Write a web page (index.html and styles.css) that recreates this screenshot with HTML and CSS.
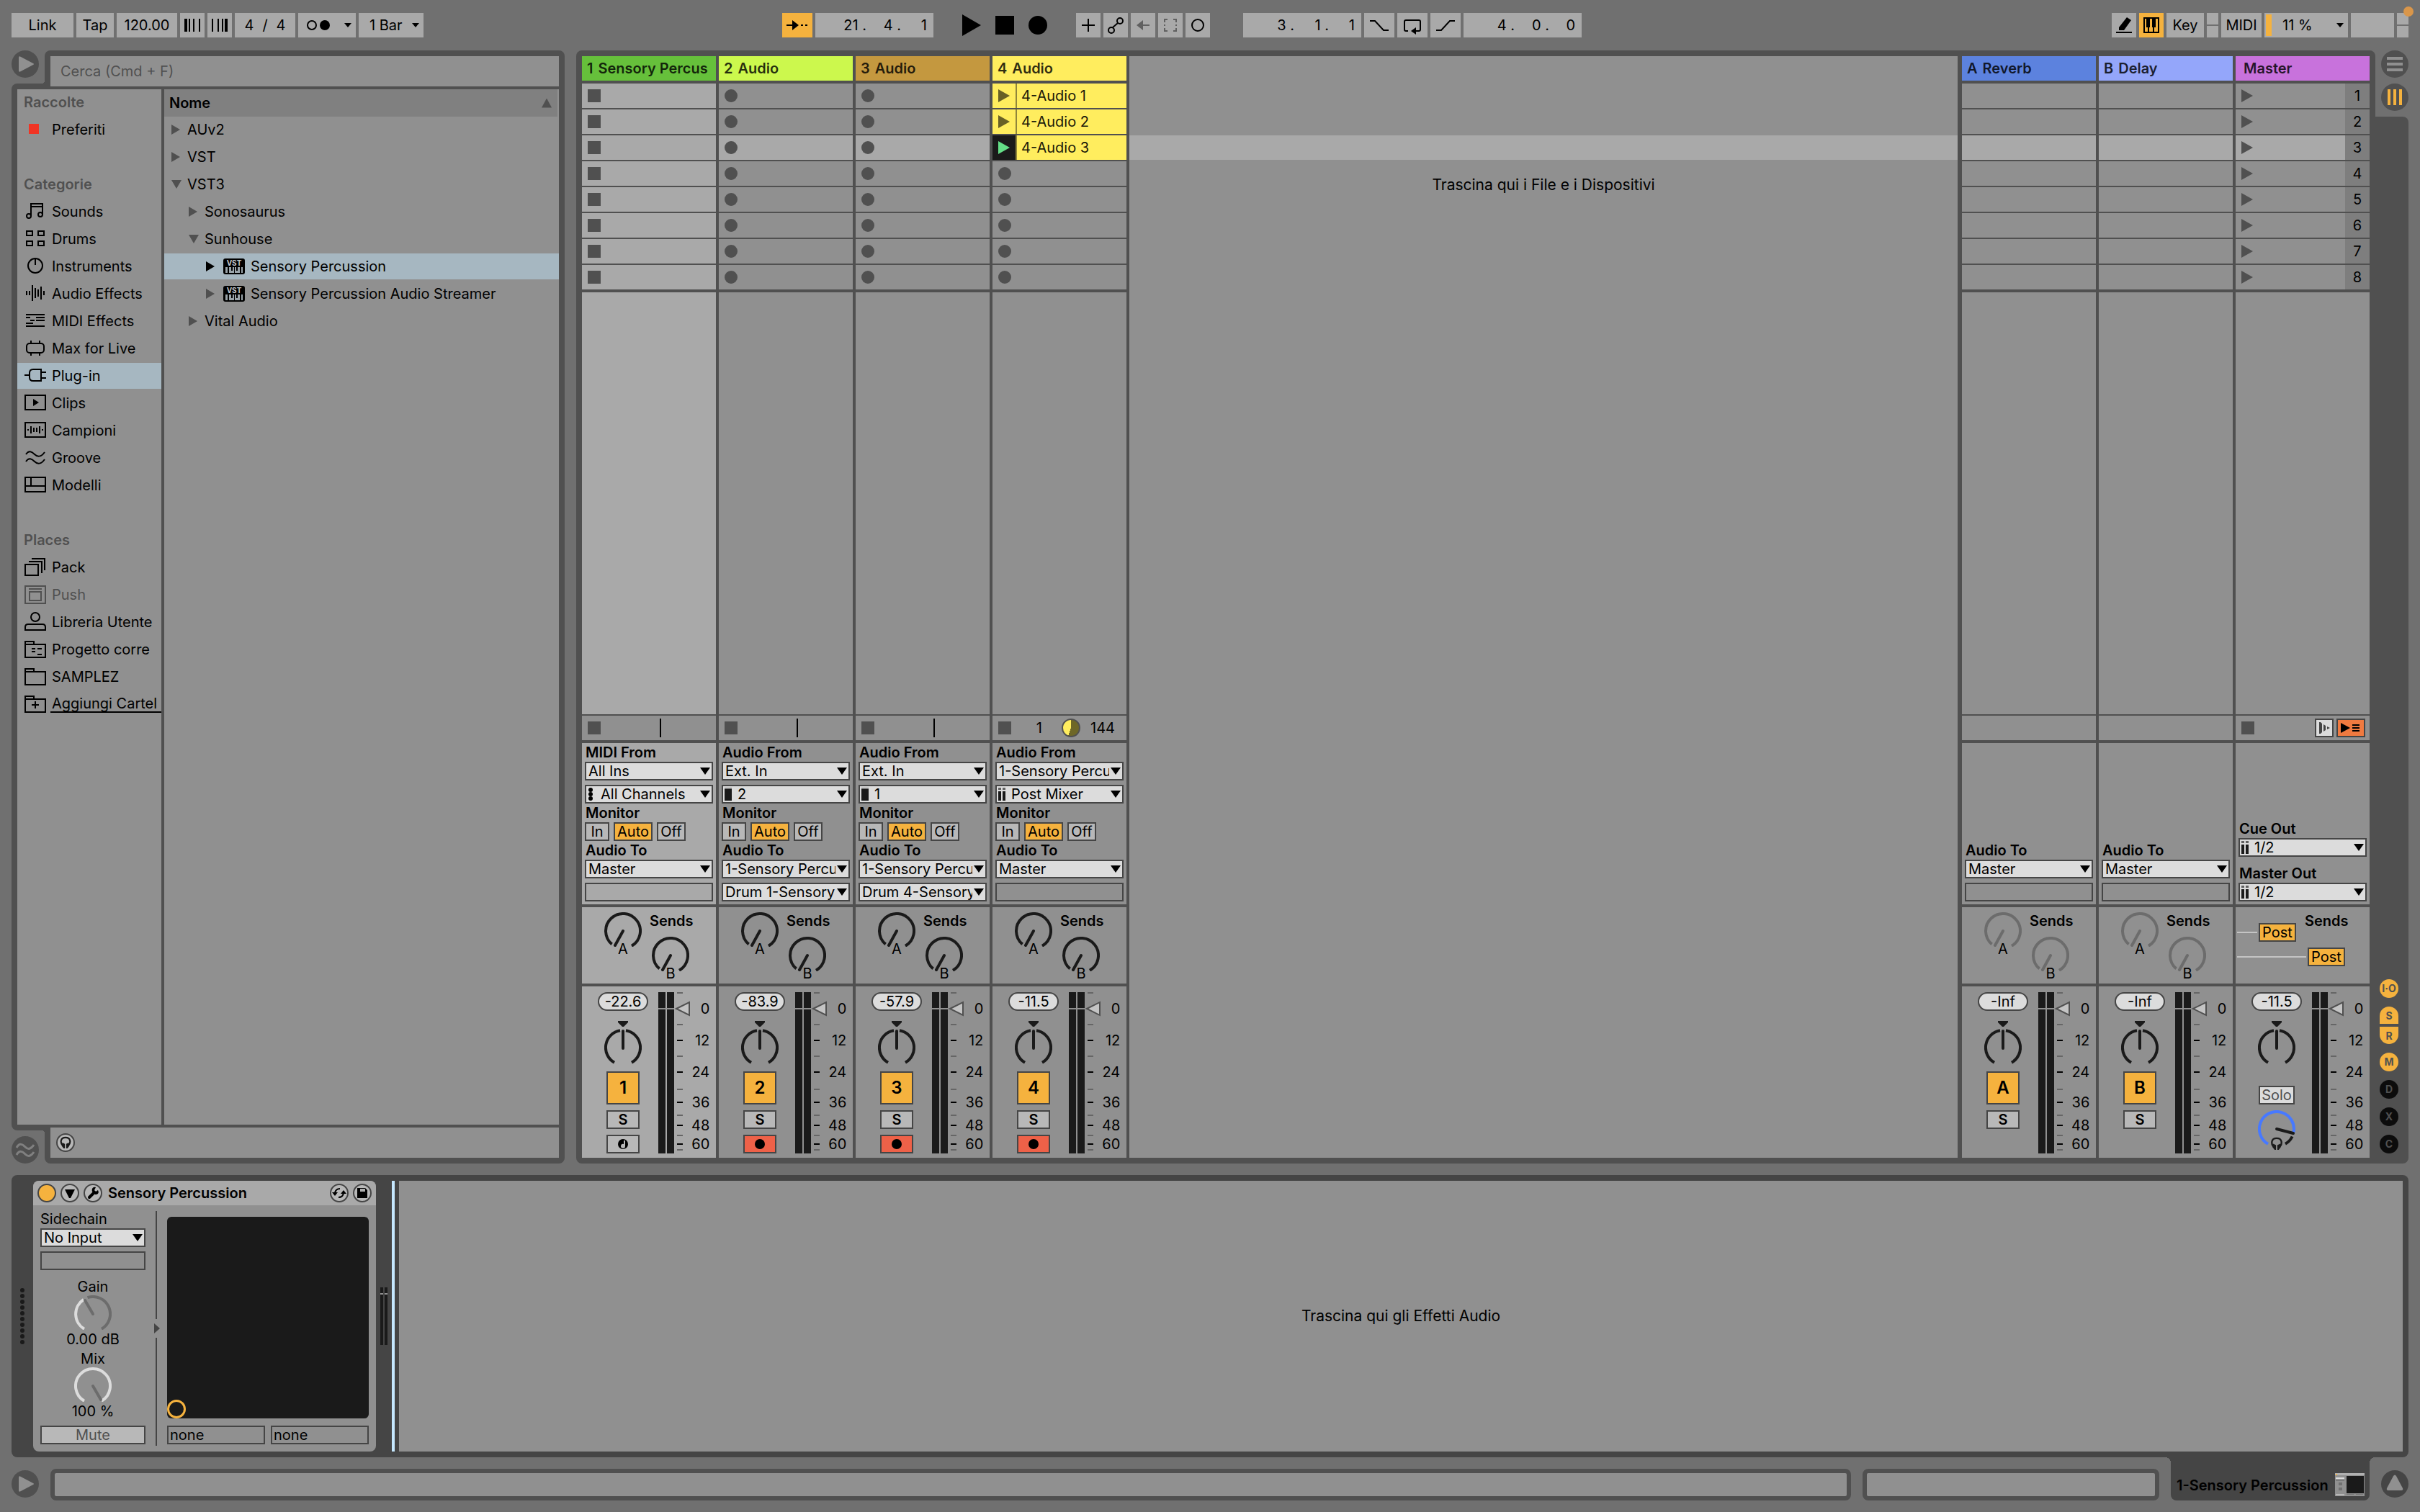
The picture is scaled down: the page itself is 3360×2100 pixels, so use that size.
FILE: index.html
```
<!DOCTYPE html>
<html lang="it">
<head>
<meta charset="utf-8">
<meta name="viewport" content="width=device-width, initial-scale=1">
<title>Live – Sensory Percussion</title>
<link rel="stylesheet" href="styles.css">
</head>
<body>

<!-- Shared drawings -->
<svg class="defs" aria-hidden="true">
  <symbol id="meter" viewBox="0 0 46 224">
    <path fill="#1a1a1a" d="M0 0h10v224H0zM12 0h10v224H12z"/>
    <path fill="#909090" d="M0 22h22v2H0z"/>
    <path stroke="#666" stroke-width="2" d="M26 1h8M26 45h8M26 89h8M26 135h8M26 171h8M26 199h8M26 219h8"/>
    <path stroke="#000" stroke-width="2" d="M26 67h8M26 111h8M26 153h8M26 185h8M26 211h8"/>
    <path fill="#c4c4c4" stroke="#505050" stroke-width="2" d="M25 23 43 14V32z"/>
  </symbol>
  <symbol id="send" viewBox="0 0 52 48">
    <path fill="none" stroke="currentColor" stroke-width="4" d="M10.600 44.400A24 24 0 1 1 38 46.800"/>
    <path stroke="currentColor" stroke-width="4" stroke-linecap="round" d="M26 26 15 46"/>
  </symbol>
  <symbol id="pan" viewBox="0 -11 52 62">
    <path fill="#1a1a1a" d="M19-11h14v2l-6 6h-2l-6-6z"/>
    <path fill="none" stroke="#1a1a1a" stroke-width="4" d="M14 46.800A24 24 0 0 1 22 2.300M30 2.300A24 24 0 0 1 38 46.800"/>
    <path stroke="#1a1a1a" stroke-width="4" stroke-linecap="round" d="M26 3v24"/>
  </symbol>
  <symbol id="phones" viewBox="0 0 18 20">
    <path fill="none" stroke="currentColor" stroke-width="2.500" d="M5 15C0 10 1 2 9 2s9 8 4 13"/>
    <path fill="currentColor" d="M4 10l4 2v7H6l-3-4zM14 10l-4 2v7h2l3-4z"/>
  </symbol>
  <symbol id="vst" viewBox="0 0 30 22">
    <rect width="30" height="22" rx="3"/>
    <path fill="#9aa4aa" d="M3 12h24v8H3z"/>
    <path d="M6 12h2v8H6zM11 12h2v5h-2zM15 12h1v8h-1zM18 12h2v5h-2zM23 12h2v8h-2z"/>
  </symbol>
  <symbol id="folder" viewBox="0 0 30 24"><path d="M1 23V1h12v4h16v18zM1 5h12"/></symbol>
</svg>

<header class="toolbar">
  <div class="group">
    <button class="ctl w86">Link</button>
    <button class="ctl w52">Tap</button>
    <input class="ctl w84" aria-label="Tempo" value="120.00">
    <button class="ctl w34" aria-label="Nudge giù"><svg width="34" height="34"><path d="M6 8h4v18H6zM12 8h2v18h-2zM18 8h2v18h-2zM26 8h2v18h-2z"/></svg></button>
    <button class="ctl w34" aria-label="Nudge su"><svg width="34" height="34"><path d="M6 8h2v18H6zM14 8h2v18h-2zM20 8h2v18h-2zM24 8h4v18h-4z"/></svg></button>
    <div class="ctl w84 signature"><input aria-label="Numeratore" value="4"><span>/</span><input aria-label="Denominatore" value="4"></div>
    <button class="ctl w80" aria-label="Metronomo"><svg width="80" height="34"><circle cx="19" cy="17" r="6" fill="none" stroke="#000" stroke-width="2"/><circle cx="37" cy="17" r="7"/><path d="M64 14h10l-5 6z"/></svg></button>
    <div class="pick small w90"><select class="ctl" aria-label="Quantizzazione"><option>1 Bar</option></select></div>
  </div>
  <span class="space-a"></span>
  <div class="group">
    <button class="ctl w42 on" aria-label="Segui"><svg width="42" height="34"><path d="M6 16h8v-6l9 7-9 7v-6H6zM26 16h3v2h-3zM32 16h3v2h-3z"/></svg></button>
    <div class="ctl position"><input aria-label="Battuta" value="21 ."><input aria-label="Movimento" value="4 ."><input aria-label="Sedicesimo" value="1"></div>
    <div class="transport">
      <button aria-label="Play"><svg width="26" height="30"><path d="M0 0 26 15 0 30z"/></svg></button>
      <button aria-label="Stop"><svg width="26" height="26"><path d="M0 0h26v26H0z"/></svg></button>
      <button aria-label="Registra"><svg width="26" height="26"><circle cx="13" cy="13" r="13"/></svg></button>
    </div>
    <button class="ctl w34" aria-label="Overdub"><svg class="line" width="34" height="34"><path d="M8 17h18M17 8v18"/></svg></button>
    <button class="ctl w34" aria-label="Arma automazione"><svg class="line" width="34" height="34"><circle cx="11" cy="24" r="4"/><circle cx="23" cy="11" r="4"/><path d="M13 20 20 14"/></svg></button>
    <button class="ctl w34" aria-label="Riattiva automazione"><svg width="34" height="34"><path fill="#606060" d="M8 17l9-7v6h9v2h-9v6z"/></svg></button>
    <button class="ctl w34" aria-label="Cattura MIDI"><svg class="line dim" width="34" height="34"><path d="M9 13V9h4M21 9h4v4M25 21v4h-4M13 25H9v-4M9 16v2M25 16v2"/></svg></button>
    <button class="ctl w34" aria-label="Registra sessione"><svg class="line" width="34" height="34"><circle cx="17" cy="17" r="8"/></svg></button>
    <div class="ctl position loop"><input aria-label="Inizio loop battuta" value="3 ."><input aria-label="Inizio loop movimento" value="1 ."><input aria-label="Inizio loop sedicesimo" value="1"></div>
    <button class="ctl w42" aria-label="Punch in"><svg class="line" width="42" height="34"><path d="M8 11h7l12 13h7"/></svg></button>
    <button class="ctl w42" aria-label="Loop"><svg class="line" width="42" height="34"><path d="M15 25h-3q-2 0-2-2V12q0-2 2-2h18q2 0 2 2v11q0 2-2 2h-7"/><path class="fill" d="M19 25l7-5v10z"/></svg></button>
    <button class="ctl w42" aria-label="Punch out"><svg class="line" width="42" height="34"><path d="M8 24h7l12-13h7"/></svg></button>
    <div class="ctl position"><input aria-label="Durata loop battute" value="4 ."><input aria-label="Durata loop movimenti" value="0 ."><input aria-label="Durata loop sedicesimi" value="0"></div>
  </div>
  <span class="space-b"></span>
  <div class="group last">
    <button class="ctl w34" aria-label="Disegno"><svg width="34" height="34"><path d="M6 26h22v2H6zM10 20 21 6l6 4-10 14h-7z"/></svg></button>
    <button class="ctl w34 on" aria-label="Tastiera MIDI"><svg width="34" height="34"><path fill="none" stroke="#000" stroke-width="2" d="M7 7h20v20H7zM13 7v20M20 7v20"/><path d="M10 7h5v13h-5zM18 7h5v13h-5z"/></svg></button>
    <button class="ctl w52">Key</button>
    <span class="split"><i></i><i></i></span>
    <button class="ctl w56">MIDI</button>
    <div class="pick small cpu"><i class="load"></i><select class="ctl" aria-label="Carico CPU"><option>11 %</option></select></div>
    <span class="ctl w60"></span>
    <span class="split"><i></i><i></i></span>
    <i class="alert"></i>
  </div>
</header>

<main class="main">
  <section class="browser" aria-label="Browser">
    <div class="browser-top">
      <button class="round" aria-label="Mostra browser"><svg width="38" height="38"><path fill="#909090" d="M10 10q0-3 3-1l17 9q2 1 0 2l-17 9q-3 2-3-1z"/></svg></button>
      <div class="tab"><input class="search" type="search" aria-label="Cerca" placeholder="Cerca (Cmd + F)"></div>
    </div>
    <div class="browser-body">
      <nav class="places">
        <h2>Raccolte</h2>
        <ul>
          <li><a href="#"><svg width="30" height="24"><path fill="#f03424" d="M6 4h14v14H6z"/></svg><span>Preferiti</span></a></li>
        </ul>
        <h2>Categorie</h2>
        <ul>
          <li><a href="#"><svg class="line" width="30" height="24"><path d="M9 18V1h16v15M9 5h16"/><circle cx="6" cy="18" r="3"/><circle cx="22" cy="16" r="3"/></svg><span>Sounds</span></a></li>
          <li><a href="#"><svg class="line" width="30" height="24"><path d="M3 1h8v6H3zM19 1h8v6h-8zM3 15h8v6H3zM19 15h8v6h-8z"/></svg><span>Drums</span></a></li>
          <li><a href="#"><svg class="line" width="30" height="24"><circle cx="15" cy="11" r="10"/><path d="M15 1v9"/></svg><span>Instruments</span></a></li>
          <li><a href="#"><svg class="line" width="30" height="24"><path d="M3 8v6M7 8v6M11 0v22M15 4v14M19 6v10M23 2v18M27 8v6"/></svg><span>Audio Effects</span></a></li>
          <li><a href="#"><svg class="line" width="30" height="24"><path d="M2 3h26M2 7h6M16 7h12M8 11h6M16 11h12M2 15h10M2 19h26"/></svg><span>MIDI Effects</span></a></li>
          <li><a href="#"><svg class="line" width="30" height="24"><rect x="3" y="5" width="24" height="13" rx="4"/><path d="M9 1v4M21 1v4M9 18v4M21 18v4"/></svg><span>Max for Live</span></a></li>
          <li><a href="#" class="sel"><svg class="line" width="30" height="24"><path d="M23 3H12q-5 0-5 5v6q0 5 5 5h11zM0 11h7M23 7h7M23 15h7"/></svg><span>Plug-in</span></a></li>
          <li><a href="#"><svg class="line" width="30" height="24"><path d="M1 1h28v20H1z"/><path class="fill" d="M12 6l8 5-8 5z"/></svg><span>Clips</span></a></li>
          <li><a href="#"><svg class="line" width="30" height="24"><path d="M1 1h28v20H1zM5 10v2M9 6v10M13 8v6M17 8v6M21 6v10M25 10v2"/></svg><span>Campioni</span></a></li>
          <li><a href="#"><svg class="line" width="30" height="24"><path d="M2 7c4-6 8-4 12 0s9 4 14-3M2 17c4-6 8-4 12 0s9 4 14-3"/></svg><span>Groove</span></a></li>
          <li><a href="#"><svg class="line" width="30" height="24"><path d="M1 1h28v20H1zM1 13h28M9 1v12"/></svg><span>Modelli</span></a></li>
        </ul>
        <h2>Places</h2>
        <ul>
          <li><a href="#"><svg class="line" width="30" height="24"><path d="M1 8h18v15H1zM6 4h18v16M10 0h18v16"/></svg><span>Pack</span></a></li>
          <li><a href="#" class="off"><svg class="line" width="30" height="24"><path d="M1 0h28v24H1zM6 4h18M7 8h16v12H7z"/></svg><span>Push</span></a></li>
          <li><a href="#"><svg class="line" width="30" height="24"><circle cx="15" cy="5" r="6"/><path d="M1 23v-4q0-4 4-4h20q4 0 4 4v4z"/></svg><span>Libreria Utente</span></a></li>
          <li><a href="#"><svg class="line" width="30" height="24"><use href="#folder"/><path d="M10 11h5M18 11h6M10 15h5M18 19h6"/></svg><span>Progetto corre</span></a></li>
          <li><a href="#"><svg class="line" width="30" height="24"><use href="#folder"/></svg><span>SAMPLEZ</span></a></li>
          <li><a href="#" class="add"><svg class="line" width="30" height="24"><use href="#folder"/><path d="M10 13h10M15 8v10"/></svg><span>Aggiungi Cartel</span></a></li>
        </ul>
      </nav>
      <div class="tree">
        <div class="tree-head"><span>Nome</span><i class="sort"></i></div>
        <ul>
          <li><i class="arrow"></i>AUv2</li>
          <li><i class="arrow"></i>VST</li>
          <li><i class="arrow open"></i>VST3</li>
          <li class="l2"><i class="arrow"></i>Sonosaurus</li>
          <li class="l2"><i class="arrow open"></i>Sunhouse</li>
          <li class="l3 sel"><i class="arrow"></i><svg width="30" height="22"><use href="#vst"/><text x="15" y="10">VST</text></svg>Sensory Percussion</li>
          <li class="l3"><i class="arrow"></i><svg width="30" height="22"><use href="#vst"/><text x="15" y="10">VST</text></svg>Sensory Percussion Audio Streamer</li>
          <li class="l2"><i class="arrow"></i>Vital Audio</li>
        </ul>
      </div>
    </div>
    <div class="browser-foot">
      <button class="round" aria-label="Groove pool"><svg class="line soft" width="38" height="38"><path d="M7 16c4-7 8-5 12-1s8 3 12-3M7 26c4-7 8-5 12-1s8 3 12-3"/></svg></button>
      <div class="tab"><div class="preview"><button class="mini" aria-label="Anteprima"><svg width="16" height="18"><use href="#phones"/></svg></button></div></div>
    </div>
  </section>

  <section class="session" aria-label="Sessione">
    <div class="tracks">

      <article class="track chosen">
        <h3 class="name green"><b>1</b><b>Sensory Percus</b></h3>
        <div class="slots"><button class="slot stop" aria-label="Stop 1"></button><button class="slot stop" aria-label="Stop 2"></button><button class="slot stop" aria-label="Stop 3"></button><button class="slot stop" aria-label="Stop 4"></button><button class="slot stop" aria-label="Stop 5"></button><button class="slot stop" aria-label="Stop 6"></button><button class="slot stop" aria-label="Stop 7"></button><button class="slot stop" aria-label="Stop 8"></button></div>
        <div class="empty"></div>
        <div class="status"><i class="square"></i><i class="bar"></i></div>
        <div class="io">
          <label for="in1">MIDI From</label>
          <div class="pick"><select id="in1"><option>All Ins</option></select></div>
          <div class="pick icon gap"><svg width="10" height="18"><circle cx="4" cy="3" r="3"/><circle cx="4" cy="9" r="3"/><circle cx="4" cy="15" r="3"/></svg><select aria-label="Canale"><option>All Channels</option></select></div>
          <span class="label">Monitor</span>
          <div class="monitor"><button>In</button><button class="on">Auto</button><button>Off</button></div>
          <label for="out1">Audio To</label>
          <div class="pick"><select id="out1"><option>Master</option></select></div>
          <div class="blank gap"></div>
        </div>
        <div class="sends"><div class="knob"><svg><use href="#send"/></svg><span>A</span></div><div class="second"><h4>Sends</h4><div class="knob"><svg><use href="#send"/></svg><span>B</span></div></div></div>
        <div class="mixer">
          <div class="strip"><span class="pill">-22.6</span><svg class="pan"><use href="#pan"/></svg><button class="act">1</button><button class="solo">S</button><button class="solo" aria-label="Arma"><svg width="16" height="16"><circle cx="8" cy="8" r="7"/><path fill="#b8b8b8" d="M9 3h2v8a3 3 0 1 1-2-3z"/></svg></button></div>
          <svg class="meter"><use href="#meter"/></svg>
          <ol class="scale"><li>0</li><li>12</li><li>24</li><li>36</li><li>48</li><li>60</li></ol>
        </div>
      </article>

      <article class="track">
        <h3 class="name lime"><b>2</b><b>Audio</b></h3>
        <div class="slots"><button class="slot rec" aria-label="Registra 1"></button><button class="slot rec" aria-label="Registra 2"></button><button class="slot rec" aria-label="Registra 3"></button><button class="slot rec" aria-label="Registra 4"></button><button class="slot rec" aria-label="Registra 5"></button><button class="slot rec" aria-label="Registra 6"></button><button class="slot rec" aria-label="Registra 7"></button><button class="slot rec" aria-label="Registra 8"></button></div>
        <div class="empty"></div>
        <div class="status"><i class="square"></i><i class="bar"></i></div>
        <div class="io">
          <label for="in2">Audio From</label>
          <div class="pick"><select id="in2"><option>Ext. In</option></select></div>
          <div class="pick icon gap"><svg width="10" height="18"><path fill="#808080" d="M0 0h10v2H0z"/><path fill="#1a1a1a" d="M0 2h10v16H0z"/></svg><select aria-label="Canale"><option>2</option></select></div>
          <span class="label">Monitor</span>
          <div class="monitor"><button>In</button><button class="on">Auto</button><button>Off</button></div>
          <label for="out2">Audio To</label>
          <div class="pick"><select id="out2"><option>1-Sensory Percussion</option></select></div>
          <div class="pick gap"><select aria-label="Uscita"><option>Drum 1-Sensory Percussion</option></select></div>
        </div>
        <div class="sends"><div class="knob"><svg><use href="#send"/></svg><span>A</span></div><div class="second"><h4>Sends</h4><div class="knob"><svg><use href="#send"/></svg><span>B</span></div></div></div>
        <div class="mixer">
          <div class="strip"><span class="pill">-83.9</span><svg class="pan"><use href="#pan"/></svg><button class="act">2</button><button class="solo">S</button><button class="solo armed" aria-label="Arma"><svg width="14" height="14"><circle cx="7" cy="7" r="7"/></svg></button></div>
          <svg class="meter"><use href="#meter"/></svg>
          <ol class="scale"><li>0</li><li>12</li><li>24</li><li>36</li><li>48</li><li>60</li></ol>
        </div>
      </article>

      <article class="track">
        <h3 class="name brown"><b>3</b><b>Audio</b></h3>
        <div class="slots"><button class="slot rec" aria-label="Registra 1"></button><button class="slot rec" aria-label="Registra 2"></button><button class="slot rec" aria-label="Registra 3"></button><button class="slot rec" aria-label="Registra 4"></button><button class="slot rec" aria-label="Registra 5"></button><button class="slot rec" aria-label="Registra 6"></button><button class="slot rec" aria-label="Registra 7"></button><button class="slot rec" aria-label="Registra 8"></button></div>
        <div class="empty"></div>
        <div class="status"><i class="square"></i><i class="bar"></i></div>
        <div class="io">
          <label for="in3">Audio From</label>
          <div class="pick"><select id="in3"><option>Ext. In</option></select></div>
          <div class="pick icon gap"><svg width="10" height="18"><path fill="#808080" d="M0 0h10v2H0z"/><path fill="#1a1a1a" d="M0 2h10v16H0z"/></svg><select aria-label="Canale"><option>1</option></select></div>
          <span class="label">Monitor</span>
          <div class="monitor"><button>In</button><button class="on">Auto</button><button>Off</button></div>
          <label for="out3">Audio To</label>
          <div class="pick"><select id="out3"><option>1-Sensory Percussion</option></select></div>
          <div class="pick gap"><select aria-label="Uscita"><option>Drum 4-Sensory Percussion</option></select></div>
        </div>
        <div class="sends"><div class="knob"><svg><use href="#send"/></svg><span>A</span></div><div class="second"><h4>Sends</h4><div class="knob"><svg><use href="#send"/></svg><span>B</span></div></div></div>
        <div class="mixer">
          <div class="strip"><span class="pill">-57.9</span><svg class="pan"><use href="#pan"/></svg><button class="act">3</button><button class="solo">S</button><button class="solo armed" aria-label="Arma"><svg width="14" height="14"><circle cx="7" cy="7" r="7"/></svg></button></div>
          <svg class="meter"><use href="#meter"/></svg>
          <ol class="scale"><li>0</li><li>12</li><li>24</li><li>36</li><li>48</li><li>60</li></ol>
        </div>
      </article>

      <article class="track">
        <h3 class="name yellow"><b>4</b><b>Audio</b></h3>
        <div class="slots"><button class="slot clip">4-Audio 1</button><button class="slot clip">4-Audio 2</button><button class="slot clip playing">4-Audio 3</button><button class="slot rec" aria-label="Registra 4"></button><button class="slot rec" aria-label="Registra 5"></button><button class="slot rec" aria-label="Registra 6"></button><button class="slot rec" aria-label="Registra 7"></button><button class="slot rec" aria-label="Registra 8"></button></div>
        <div class="empty"></div>
        <div class="status"><i class="square"></i><span class="count">1</span><i class="pie"></i><span>144</span></div>
        <div class="io">
          <label for="in4">Audio From</label>
          <div class="pick"><select id="in4"><option>1-Sensory Percussion</option></select></div>
          <div class="pick icon gap"><svg width="10" height="18"><path fill="#606060" d="M0 0h4v3H0zM6 0h4v3H6z"/><path fill="#1a1a1a" d="M0 5h4v13H0zM6 5h4v13H6z"/></svg><select aria-label="Canale"><option>Post Mixer</option></select></div>
          <span class="label">Monitor</span>
          <div class="monitor"><button>In</button><button class="on">Auto</button><button>Off</button></div>
          <label for="out4">Audio To</label>
          <div class="pick"><select id="out4"><option>Master</option></select></div>
          <div class="blank gap"></div>
        </div>
        <div class="sends"><div class="knob"><svg><use href="#send"/></svg><span>A</span></div><div class="second"><h4>Sends</h4><div class="knob"><svg><use href="#send"/></svg><span>B</span></div></div></div>
        <div class="mixer">
          <div class="strip"><span class="pill">-11.5</span><svg class="pan"><use href="#pan"/></svg><button class="act">4</button><button class="solo">S</button><button class="solo armed" aria-label="Arma"><svg width="14" height="14"><circle cx="7" cy="7" r="7"/></svg></button></div>
          <svg class="meter"><use href="#meter"/></svg>
          <ol class="scale"><li>0</li><li>12</li><li>24</li><li>36</li><li>48</li><li>60</li></ol>
        </div>
      </article>

      <div class="drop"><i class="band"></i><p>Trascina qui i File e i Dispositivi</p></div>

      <article class="track return">
        <h3 class="name blue"><b>A</b><b>Reverb</b></h3>
        <div class="slots"><i class="slot"></i><i class="slot"></i><i class="slot"></i><i class="slot"></i><i class="slot"></i><i class="slot"></i><i class="slot"></i><i class="slot"></i></div>
        <div class="empty"></div>
        <div class="status"></div>
        <div class="io">
          <label for="outA">Audio To</label>
          <div class="pick"><select id="outA"><option>Master</option></select></div>
          <div class="blank gap"></div>
        </div>
        <div class="sends faded"><div class="knob"><svg><use href="#send"/></svg><span>A</span></div><div class="second"><h4>Sends</h4><div class="knob"><svg><use href="#send"/></svg><span>B</span></div></div></div>
        <div class="mixer">
          <div class="strip"><span class="pill">-Inf</span><svg class="pan"><use href="#pan"/></svg><button class="act">A</button><button class="solo">S</button></div>
          <svg class="meter"><use href="#meter"/></svg>
          <ol class="scale"><li>0</li><li>12</li><li>24</li><li>36</li><li>48</li><li>60</li></ol>
        </div>
      </article>

      <article class="track">
        <h3 class="name sky"><b>B</b><b>Delay</b></h3>
        <div class="slots"><i class="slot"></i><i class="slot"></i><i class="slot"></i><i class="slot"></i><i class="slot"></i><i class="slot"></i><i class="slot"></i><i class="slot"></i></div>
        <div class="empty"></div>
        <div class="status"></div>
        <div class="io">
          <label for="outB">Audio To</label>
          <div class="pick"><select id="outB"><option>Master</option></select></div>
          <div class="blank gap"></div>
        </div>
        <div class="sends faded"><div class="knob"><svg><use href="#send"/></svg><span>A</span></div><div class="second"><h4>Sends</h4><div class="knob"><svg><use href="#send"/></svg><span>B</span></div></div></div>
        <div class="mixer">
          <div class="strip"><span class="pill">-Inf</span><svg class="pan"><use href="#pan"/></svg><button class="act">B</button><button class="solo">S</button></div>
          <svg class="meter"><use href="#meter"/></svg>
          <ol class="scale"><li>0</li><li>12</li><li>24</li><li>36</li><li>48</li><li>60</li></ol>
        </div>
      </article>

      <article class="track master">
        <h3 class="name pink"><b>Master</b></h3>
        <div class="slots"><button class="slot scene"><span>1</span></button><button class="slot scene"><span>2</span></button><button class="slot scene"><span>3</span></button><button class="slot scene"><span>4</span></button><button class="slot scene"><span>5</span></button><button class="slot scene"><span>6</span></button><button class="slot scene"><span>7</span></button><button class="slot scene"><span>8</span></button></div>
        <div class="empty"></div>
        <div class="status"><i class="square"></i>
          <button class="box back" aria-label="Torna all'arrangiamento"><svg width="22" height="22"><path fill="#454545" d="M4 3h2l2 2v12l-2 2H4zM10 6l3 2v6l-3 2zM15 9l4 2-4 2z"/></svg></button>
          <button class="box launch" aria-label="Lancia scena"><svg width="36" height="22"><path d="M4 4 17 11 4 18zM20 6h10v2H20zM20 10h10v2H20zM20 14h10v2H20z"/></svg></button>
        </div>
        <div class="io">
          <label for="cue">Cue Out</label>
          <div class="pick icon"><svg width="10" height="18"><path fill="#606060" d="M0 0h4v3H0zM6 0h4v3H6z"/><path fill="#1a1a1a" d="M0 5h4v13H0zM6 5h4v13H6z"/></svg><select id="cue"><option>1/2</option></select></div>
          <label class="wide" for="mout">Master Out</label>
          <div class="pick icon"><svg width="10" height="18"><path fill="#606060" d="M0 0h4v3H0zM6 0h4v3H6z"/><path fill="#1a1a1a" d="M0 5h4v13H0zM6 5h4v13H6z"/></svg><select id="mout"><option>1/2</option></select></div>
        </div>
        <div class="sends posts">
          <div><i class="wire"></i><button>Post</button><h4>Sends</h4></div>
          <div><i class="wire long"></i><button>Post</button></div>
        </div>
        <div class="mixer">
          <div class="strip"><span class="pill">-11.5</span><svg class="pan"><use href="#pan"/></svg><button class="cue-solo">Solo</button>
            <svg class="cue" viewBox="0 0 52 56"><g fill="none" stroke-width="4"><path stroke="#4779ff" d="M14 46.800A24 24 0 1 1 49.500 30.500"/><path stroke="#1a1a1a" d="M47.600 36.500A24 24 0 0 1 38 46.800"/><path stroke="#1a1a1a" stroke-linecap="round" d="M26 26 49 32"/></g><svg x="17" y="37" width="18" height="19" color="#1a1a1a"><use href="#phones"/></svg></svg>
          </div>
          <svg class="meter"><use href="#meter"/></svg>
          <ol class="scale"><li>0</li><li>12</li><li>24</li><li>36</li><li>48</li><li>60</li></ol>
        </div>
      </article>
    </div>

    <div class="side">
      <div class="views">
        <button class="round" aria-label="Arrangiamento"><svg width="38" height="38"><path fill="#909090" d="M8 9h22v4H8zM8 17h22v4H8zM8 25h22v4H8z"/></svg></button>
        <button class="round" aria-label="Sessione"><svg width="38" height="38"><path fill="#f5b23e" d="M9 8h4v22H9zM17 8h4v22h-4zM25 8h4v22h-4z"/></svg></button>
      </div>
      <div class="toggles">
        <button>I·O</button>
        <button class="upper">S</button>
        <button class="lower">R</button>
        <button>M</button>
        <button class="dark">D</button>
        <button class="dark">X</button>
        <button class="dark">C</button>
      </div>
    </div>
  </section>
</main>

<section class="detail" aria-label="Dispositivi">
  <div class="grip"><i></i><i></i><i></i><i></i><i></i><i></i><i></i><i></i><i></i><i></i></div>
  <article class="device">
    <header>
      <button class="mini power" aria-label="Attiva"></button>
      <button class="mini" aria-label="Mostra parametri"><svg width="22" height="22"><path d="M4 6h14l-6 12h-2z"/></svg></button>
      <button class="mini" aria-label="Apri finestra"><svg width="22" height="22"><path fill="none" stroke="#000" stroke-width="4" stroke-linecap="round" d="M6 17l7-7"/><path d="M18 7l-3 2-2-2 2-4c-4-1-6 2-5 6l4 4c4 0 6-2 4-6z"/></svg></button>
      <h3>Sensory Percussion</h3>
      <button class="mini" aria-label="Hot-swap"><svg width="22" height="22"><path fill="none" stroke="#000" stroke-width="2" d="M12 5q-6 0-7 6M10 17q6 0 7-6"/><path d="M1 10h8l-4 5zM13 12h8l-4-5z"/></svg></button>
      <button class="mini" aria-label="Salva preset"><svg width="22" height="22"><path d="M4 4h11l3 3v11H4z"/><path fill="#b0b0b0" d="M8 5h7v4H8z"/></svg></button>
    </header>
    <div class="device-body">
      <div class="params">
        <label for="sc">Sidechain</label>
        <div class="pick"><select id="sc"><option>No Input</option></select></div>
        <div class="blank gap"></div>
        <div class="dial first"><span>Gain</span><svg viewBox="0 0 52 48"><g fill="none" stroke-width="4"><path stroke="#dcdcdc" d="M14 46.800A24 24 0 0 1 13 6"/><path stroke="#6c6c6c" d="M18.500 3.200A24 24 0 0 1 38 46.800"/><path stroke="#6c6c6c" stroke-linecap="round" d="M26 26 15 7"/></g></svg><span class="val">0.00 dB</span></div>
        <div class="dial"><span>Mix</span><svg viewBox="0 0 52 48"><g fill="none" stroke-width="4"><path stroke="#dcdcdc" d="M14 46.800A24 24 0 1 1 38 46.800"/><path stroke="#6c6c6c" stroke-linecap="round" d="M26 26 37 45"/></g></svg><span class="val">100 %</span></div>
        <button class="mute">Mute</button>
      </div>
      <div class="fold"><i></i><b></b><i></i></div>
      <div class="xy">
        <div class="pad"><i></i></div>
        <div class="axes"><button>none</button><button>none</button></div>
      </div>
    </div>
  </article>
  <div class="chain-meter"><svg width="10" height="80"><path fill="#1a1a1a" d="M0 0h4v80H0zM6 0h4v80H6z"/><path fill="#909090" d="M0 8h4v2H0zM6 8h4v2H6z"/></svg></div>
  <i class="insert"></i>
  <div class="fx-drop">Trascina qui gli Effetti Audio</div>
</section>

<footer class="foot">
  <button class="round" aria-label="Mostra info"><svg width="38" height="38"><path fill="#909090" d="M10 10q0-3 3-1l17 9q2 1 0 2l-17 9q-3 2-3-1z"/></svg></button>
  <div class="info grow"></div>
  <div class="info"></div>
  <div class="device-tab"><span>1-Sensory Percussion</span>
    <svg width="42" height="32"><path fill="#909090" d="M0 0h41v32H0z"/><path fill="#b0b0b0" d="M0 0h41v3H0z"/><path fill="#f5b23e" d="M1 1h2v2H1z"/><path fill="#dcdcdc" d="M1 6h12v2H1z"/><path fill="#707070" d="M1 10h12v1H1zM5 13h5v4H5zM5 20h5v4H5z"/><path fill="#b8b8b8" d="M1 29h12v2H1z"/><path fill="#777" d="M16 29h10v1H16zM29 29h10v1H29z"/><path fill="#1a1a1a" d="M16 4h24v24H16z"/></svg>
  </div>
  <button class="round deep" aria-label="Mostra dettaglio"><svg width="38" height="38"><path fill="#909090" d="M17 8q2-3 4 0l9 17q1 3-2 3H10q-3 0-2-3z"/></svg></button>
</footer>
</body>
</html>
```
FILE: styles.css
```
:root {
  --page: #707070;
  --frame: #505050;
  --deep: #454545;
  --area: #909090;
  --light: #a9a9a9;
  --field: #dcdcdc;
  --button: #b8b8b8;
  --amber: #f5b23e;
  --ink: #1a1a1a;
}

*, *::before, *::after { box-sizing: border-box; }

body {
  margin: 0;
  min-height: 100vh;
  padding: 18px 16px 16px;
  display: flex;
  flex-direction: column;
  background: var(--page);
  color: #000;
  font: 20px/24px "Inter", "Liberation Sans", sans-serif;
}

button, input, select {
  font: inherit;
  color: inherit;
  margin: 0;
  padding: 0;
  border: 0;
  border-radius: 0;
  background: none;
  appearance: none;
  outline: 0;
}
input { min-width: 0; }
ul, ol { list-style: none; margin: 0; padding: 0; }
h2, h3, h4, p { margin: 0; font: inherit; }
a { color: inherit; text-decoration: none; }
svg { display: block; flex: none; }
.defs { position: absolute; width: 0; height: 0; }
.line { fill: none; stroke: currentColor; stroke-width: 2; overflow: visible; }
.line .fill { fill: currentColor; stroke: none; }
.line.dim { color: #606060; }
.line.soft { color: #808080; stroke-width: 3; }

/* Control bar */
.toolbar { display: flex; margin-bottom: 18px; }
.group { display: flex; gap: 4px; position: relative; }
.space-a { flex: 249; }
.space-b { flex: 368; }
.ctl { height: 34px; background: var(--light); text-align: center; }
.ctl.on { background: var(--amber); }
.w34 { width: 34px; }
.w42 { width: 42px; }
.w52 { width: 52px; }
.w56 { width: 56px; }
.w60 { width: 60px; }
.w80 { width: 80px; }
.w84 { width: 84px; }
.w86 { width: 86px; }
.w90 { width: 90px; }
.signature { display: flex; align-items: center; padding: 0 9px; }
.signature > * { width: 22px; text-align: center; }
.position { display: flex; align-items: center; width: 164px; padding-right: 9px; }
.position input { text-align: right; width: 48px; }
.position input:first-child { width: 71px; }
.position input:last-child { width: 36px; }
.position.loop { margin-left: 42px; }
.transport { display: flex; align-items: center; gap: 20px; margin: 0 36px; }
.split { display: flex; flex-direction: column; gap: 2px; width: 16px; }
.split i { flex: 1; background: var(--light); }
.pick.small .ctl { width: 100%; text-align: left; padding-left: 15px; border: 0; height: 34px; background: var(--light); }
.pick.small::after { width: 10px; height: 6px; margin-right: 6px; }
.pick.cpu { width: 116px; }
.pick.cpu .ctl { padding-left: 25px; }
.load { width: 8px; height: 30px; margin-left: 2px; background: var(--amber); }
.alert { position: absolute; top: -9px; right: -7px; width: 14px; height: 14px; border-radius: 50%; background: #d9964a; }

/* Round corner buttons */
.round { width: 38px; height: 38px; border-radius: 50%; background: var(--frame); flex: none; }
.round.deep { background: var(--deep); }

/* Drop-down: select with a small arrow over its right end */
.pick { display: grid; grid-template-columns: 1fr; align-items: center; }
.pick > * { grid-area: 1 / 1; }
.pick select { width: 100%; height: 26px; border: 2px solid var(--deep); background: var(--field); padding: 0 18px 0 3px; line-height: 22px; overflow: hidden; text-overflow: clip; }
.pick::after { content: ""; grid-area: 1 / 1; justify-self: end; width: 14px; height: 10px; margin-right: 4px; background: #000; clip-path: polygon(0 0, 100% 0, 50% 100%); pointer-events: none; }
.pick > svg, .load { z-index: 1; }
.pick.icon svg { margin-left: 4px; }
.pick.icon select { padding-left: 20px; }
.blank { height: 26px; border: 2px solid var(--deep); }
.gap { margin-top: 6px; }

/* Main area */
.main { flex: 1; display: flex; gap: 16px; min-height: 0; }

/* Browser */
.browser { width: 768px; display: flex; flex-direction: column; flex: none; }
.browser-top, .browser-foot { display: flex; gap: 8px; }
.browser-top { margin-bottom: -4px; }
.browser-foot { margin-top: -4px; align-items: flex-end; }
.tab { flex: 1; background: var(--frame); position: relative; }
.browser-top .tab { padding: 8px 8px 0; border-radius: 8px 8px 0 0; }
.browser-foot .tab { padding: 0 8px 8px; border-radius: 0 0 8px 8px; }
.tab::before { content: ""; position: absolute; left: -4px; width: 4px; height: 4px; }
.browser-top .tab::before { bottom: 4px; background: radial-gradient(circle at 0 0, transparent 4px, var(--frame) 4px); }
.browser-foot .tab::before { top: 4px; background: radial-gradient(circle at 0 100%, transparent 4px, var(--frame) 4px); }
.search { display: block; width: 100%; height: 42px; padding: 0 14px; background: var(--area); }
.search::placeholder { color: var(--frame); opacity: 1; }
.browser-body { flex: 1; display: flex; gap: 4px; padding: 8px; background: var(--frame); border-radius: 8px 0 0 8px; }
.places { width: 200px; background: var(--area); }
.places h2 { padding-left: 9px; font-weight: 600; color: var(--frame); line-height: 36px; margin-bottom: 2px; }
.places ul { margin-bottom: 40px; }
.places a { display: flex; align-items: center; gap: 8px; height: 36px; margin-bottom: 2px; padding: 0 8px 0 10px; white-space: nowrap; }
.places .off { color: var(--frame); }
.places .add { padding-right: 0; gap: 6px; }
.places .add span { flex: 1; padding-left: 2px; border-bottom: 2px solid #000; line-height: 22px; }
.places .sel, .tree .sel { background: #a6b7c1; }
.tree { flex: 1; background: var(--area); }
.tree-head { display: flex; justify-content: space-between; align-items: center; height: 38px; margin-right: 2px; padding: 0 8px 0 7px; background: #808080; font-weight: 600; }
.sort { width: 14px; height: 13px; background: var(--frame); clip-path: polygon(50% 0, 100% 100%, 0 100%); }
.tree li { display: flex; align-items: center; height: 36px; margin-bottom: 2px; padding-left: 10px; line-height: 22px; }
.tree .l2 { padding-left: 34px; }
.tree .l3 { padding-left: 58px; }
.tree li svg { margin: 0 8px 0 2px; }
.tree text { font-size: 10px; font-weight: 700; text-anchor: middle; fill: #c4ccd0; }
.arrow { width: 12px; height: 14px; margin-right: 10px; background: var(--frame); clip-path: polygon(0 0, 100% 50%, 0 100%); }
.arrow.open { width: 14px; height: 12px; margin-right: 8px; clip-path: polygon(0 0, 100% 0, 50% 100%); }
.sel .arrow { background: #000; }
.preview { display: flex; align-items: center; height: 42px; padding-left: 8px; background: var(--area); }
.mini { display: grid; place-items: center; width: 26px; height: 26px; border: 2px solid var(--deep); border-radius: 50%; background: var(--button); color: var(--ink); flex: none; }

/* Session grid */
.session { flex: 1; display: flex; min-width: 0; }
.tracks { flex: 1; display: flex; gap: 4px; padding: 8px; background: var(--frame); border-radius: 8px 8px 0 8px; }
.track { width: 186px; display: flex; flex-direction: column; gap: 4px; flex: none; }
.return { margin-left: 2px; }
.name { display: flex; align-items: center; gap: 7px; height: 34px; padding-left: 7px; font-weight: 600; white-space: nowrap; overflow: hidden; color: rgba(0, 0, 0, .82); }
.name b { font-weight: 600; }
.master .name { padding-left: 11px; }
.green { background: #66c03b; }
.lime { background: #ccf84d; }
.brown { background: #c4983f; }
.yellow { background: #ffed5e; }
.blue { background: #5c82de; }
.sky { background: #94a6fa; }
.pink { background: #c872dc; }

.slots { display: flex; flex-direction: column; gap: 2px; }
.slot { display: flex; align-items: center; height: 34px; padding-left: 8px; background: var(--area); }
.slot:nth-child(3), .chosen .slot { background: var(--light); }
.slot.stop::before, .slot.rec::before, .square { content: ""; width: 18px; height: 18px; background: var(--frame); }
.slot.rec::before { border-radius: 50%; }
.slot.clip { padding: 0; background: linear-gradient(90deg, #ffed5e 32px, #8f853a 32px, #8f853a 34px, #ffed5e 34px); color: #1a1a0a; }
.slot.clip::before { content: ""; width: 16px; height: 18px; margin: 0 16px 0 8px; background: #686026; clip-path: polygon(0 0, 100% 50%, 0 100%); }
.slot.clip.playing { background: linear-gradient(90deg, var(--ink) 32px, #8f853a 32px, #8f853a 34px, #ffed5e 34px); }
.slot.clip.playing::before { background: #64de87; }
.slot.scene { justify-content: space-between; }
.slot.scene::before { content: ""; width: 16px; height: 18px; background: var(--frame); clip-path: polygon(0 0, 100% 50%, 0 100%); }
.slot.scene span { width: 34px; line-height: 34px; background: #7e7e7e; text-align: center; }
.empty { flex: 1; background: var(--area); margin-bottom: -2px; }
.chosen .empty, .chosen .io, .chosen .sends, .chosen .mixer { background: var(--light); }

.status { display: flex; align-items: center; height: 34px; padding-left: 8px; background: var(--area); }
.bar { width: 2px; height: 26px; margin-left: 82px; background: #000; }
.count { width: 43px; text-align: right; }
.pie { width: 26px; height: 26px; margin: 0 14px 0 27px; border: 2px solid var(--frame); border-radius: 50%; background: conic-gradient(#6e6727 0 200deg, #ffed5e 200deg); }
.box { height: 26px; border: 2px solid var(--deep); background: var(--field); }
.back { margin-left: auto; width: 26px; }
.launch { width: 40px; margin: 0 6px 0 4px; background: #f07a40; }

.io { display: flex; flex-direction: column; justify-content: flex-end; height: 224px; padding: 0 4px 4px; background: var(--area); }
.io label, .io .label { height: 26px; line-height: 27px; padding-left: 1px; font-weight: 600; }
.io .wide { margin-top: 10px; }
.monitor { display: flex; gap: 6px; }
.monitor button { height: 26px; width: 40px; border: 2px solid var(--deep); background: var(--button); line-height: 22px; }
.monitor button:first-child { width: 34px; }
.monitor .on { width: 54px; background: var(--amber); }

.sends { display: flex; align-items: flex-start; height: 106px; padding: 7px 0 0 31px; background: var(--area); }
.sends h4 { font-weight: 600; }
.second { margin-left: 11px; }
.second .knob { margin: 10px 0 0 3px; }
.knob { width: 52px; text-align: center; }
.knob svg { width: 52px; height: 48px; margin-bottom: -9px; color: var(--ink); }
.knob span { display: block; }
.faded .knob svg { color: #6c6c6c; }
.posts { flex-direction: column; gap: 8px; padding: 22px 0 0 2px; }
.posts div { display: flex; align-items: center; height: 26px; }
.posts button { width: 52px; height: 26px; margin-left: 2px; border: 2px solid var(--deep); background: var(--amber); line-height: 22px; }
.posts h4 { margin-left: 12px; align-self: flex-start; margin-top: -15px; }
.wire { width: 28px; height: 2px; background: #c4c4c4; }
.wire.long { width: 96px; }

.mixer { display: flex; height: 238px; padding-top: 8px; background: var(--area); }
.strip { display: flex; flex-direction: column; align-items: center; gap: 8px; width: 98px; margin-left: 8px; }
.pill { width: 70px; height: 26px; margin-bottom: 6px; border: 2px solid var(--deep); border-radius: 13px; background: var(--field); line-height: 22px; text-align: center; }
.pan { width: 52px; height: 62px; }
.act { width: 46px; height: 46px; border: 2px solid var(--deep); background: var(--amber); font-size: 24px; font-weight: 600; }
.solo { display: grid; place-items: center; width: 46px; height: 26px; border: 2px solid var(--deep); background: var(--button); font-weight: 600; line-height: 22px; }
.armed { background: #ee6148; }
.cue-solo { width: 50px; height: 26px; margin-top: 20px; border: 2px solid var(--deep); background: var(--field); color: var(--frame); line-height: 22px; }
.cue { width: 52px; height: 56px; }
.meter { width: 46px; height: 224px; }
.scale { display: grid; grid-template-rows: 46px 42px 46px 38px 26px 26px; width: 22px; height: 224px; }
.scale li { align-self: center; justify-self: end; }

.drop { flex: 1; background: var(--area); text-align: center; font-size: 21px; }
.band { display: block; height: 34px; margin: 110px 0 23px; background: var(--light); }
.drop::before { content: ""; display: table; }

/* View selectors right of the session */
.side { width: 46px; display: flex; flex-direction: column; }
.views { display: flex; flex-direction: column; gap: 8px; height: 92px; padding-left: 8px; }
.toggles { flex: 1; display: flex; flex-direction: column; justify-content: flex-end; gap: 12px; padding: 0 0 14px 6px; background: var(--frame); border-radius: 0 8px 8px 0; }
.toggles button { width: 26px; height: 26px; border-radius: 50%; background: var(--amber); color: var(--frame); font-size: 14px; font-weight: 700; line-height: 26px; }
.toggles .upper { height: 24px; border-radius: 13px 13px 0 0; margin-bottom: -8px; }
.toggles .lower { height: 24px; border-radius: 0 0 13px 13px; }
.toggles .dark { background: #0c0c0c; }

/* Device view */
.detail { display: flex; height: 392px; margin-top: 16px; padding: 8px; background: var(--deep); border-radius: 8px; }
.grip { display: flex; flex-direction: column; justify-content: center; gap: 2px; width: 22px; padding-left: 4px; }
.grip i { width: 6px; height: 6px; border-radius: 50%; background: var(--ink); }
.device { width: 476px; display: flex; flex-direction: column; border-radius: 8px; background: var(--area); overflow: hidden; }
.device header { display: flex; align-items: center; gap: 6px; height: 34px; padding: 0 6px; background: var(--light); }
.device .mini { background: var(--button); }
.device .mini.power { background: var(--amber); }
.device h3 { flex: 1; padding-left: 2px; font-weight: 600; }
.device-body { flex: 1; display: flex; }
.params { width: 170px; display: flex; flex-direction: column; padding: 6px 14px 10px 10px; }
.params label { line-height: 26px; }
.dial { display: flex; flex-direction: column; align-items: center; margin-top: 2px; }
.dial.first { margin-top: 11px; }
.dial svg { width: 52px; height: 48px; }
.dial .val { line-height: 26px; }
.mute, .axes button { height: 26px; border: 2px solid var(--deep); line-height: 22px; }
.mute { margin-top: auto; background: var(--button); color: var(--frame); }
.fold { display: flex; flex-direction: column; gap: 6px; width: 2px; padding: 8px 0; }
.fold i { flex: 1; background: var(--deep); }
.fold b { width: 8px; height: 14px; margin-left: -2px; background: var(--deep); clip-path: polygon(0 0, 100% 50%, 0 100%); }
.xy { flex: 1; display: flex; flex-direction: column; gap: 10px; padding: 16px 10px 10px 14px; }
.pad { flex: 1; display: flex; align-items: flex-end; border-radius: 6px; background: var(--ink); }
.pad i { width: 26px; height: 26px; border: 3px solid var(--amber); border-radius: 50%; }
.axes { display: flex; gap: 8px; }
.axes button { flex: 1; padding-left: 2px; text-align: left; }
.chain-meter { display: flex; align-items: center; width: 22px; padding-left: 6px; }
.insert { width: 4px; margin-right: 6px; background: #c6e8ff; }
.fx-drop { flex: 1; display: grid; place-items: center; background: var(--area); font-size: 21px; }

/* Bottom bar */
.foot { display: flex; gap: 16px; height: 60px; }
.foot .round { margin-top: 18px; }
.info { width: 412px; height: 44px; margin-top: 16px; border: 6px solid var(--frame); border-radius: 8px; background: var(--area); }
.info.grow { flex: 1; }
.device-tab { display: flex; align-items: flex-end; justify-content: space-between; width: 276px; padding: 0 6px 6px 8px; position: relative; border-radius: 0 0 8px 8px; background: var(--deep); font-weight: 600; white-space: nowrap; }
.device-tab span { line-height: 30px; }
.device-tab::before, .device-tab::after { content: ""; position: absolute; top: 0; width: 8px; height: 8px; }
.device-tab::before { left: -8px; background: radial-gradient(circle at 0 100%, transparent 8px, var(--deep) 8px); }
.device-tab::after { right: -8px; background: radial-gradient(circle at 100% 100%, transparent 8px, var(--deep) 8px); }
```
